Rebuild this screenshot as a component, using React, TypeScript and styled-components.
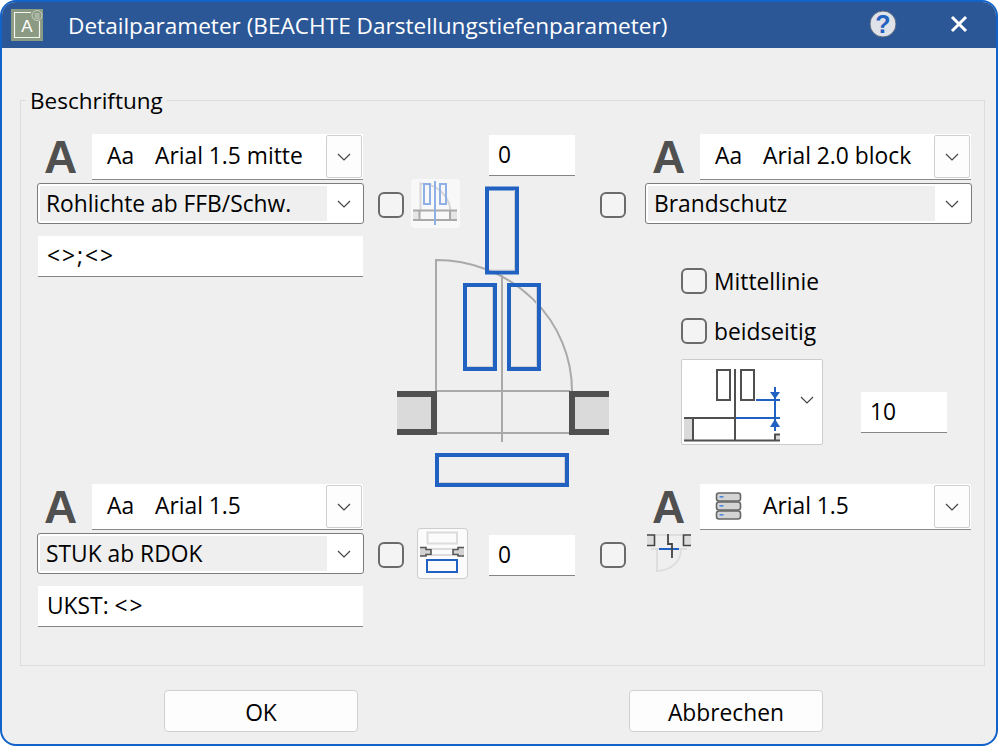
import React from 'react'
import styled, { createGlobalStyle } from 'styled-components'

const BLUE = '#2161c1'
const DARK = '#505050'
const GREY = '#a9a9a9'
const PALE = '#dadada'

const GlobalStyle = createGlobalStyle`
  html, body {
    margin: 0;
    padding: 0;
    background: #ffffff;
  }
  * {
    box-sizing: border-box;
  }
  body {
    font-family: "Open Sans", "Noto Sans", "Liberation Sans", sans-serif;
    color: #000000;
  }
`

const Chevron = () => (
  <svg width="14" height="8" viewBox="0 0 14 8" fill="none">
    <polyline points="1,1 7,7 13,1" stroke="#444444" strokeWidth="1.2" />
  </svg>
)

const AppIcon = () => (
  <svg width="32" height="32" viewBox="11 9 32 32">
    <rect x="11" y="9" width="32" height="32" fill="#8b9a82" />
    <path d="M31 12.5H14.5V37.5H39.5V21" fill="none" stroke="#f2f4ef" strokeWidth="1.2" />
    <circle cx="37" cy="15.5" r="5" fill="none" stroke="#c9d0c2" strokeWidth="1" />
    <path d="M34.5 14h5M34.5 16h5M34.5 18h5" stroke="#dde1d8" strokeWidth="0.8" />
    <text x="27" y="32" textAnchor="middle" fontFamily="Liberation Sans" fontSize="17" fill="#ffffff">A</text>
  </svg>
)

const HelpIcon = () => (
  <svg width="28" height="28" viewBox="0 0 28 28">
    <circle cx="14" cy="14" r="13" fill="#dfe2e8" stroke="#5f6b80" strokeWidth="1" />
    <text x="14" y="23" textAnchor="middle" fontFamily="Liberation Sans" fontWeight="700" fontSize="25" fill={BLUE}>?</text>
  </svg>
)

const CloseIcon = () => (
  <svg width="18" height="18" viewBox="0 0 18 18">
    <path d="M2 2L16 16M16 2L2 16" stroke="#ffffff" strokeWidth="3" />
  </svg>
)

const StackIcon = () => (
  <svg width="27" height="28" viewBox="0 0 27 28">
    {[1, 10, 19].map((y) => (
      <g key={y}>
        <rect x="1.5" y={y} width="24" height="8" rx="2.5" fill="#d4d4d4" stroke="#666666" strokeWidth="1.6" />
        <rect x="4.5" y={y + 3} width="4" height="1.6" fill="#4a86dc" />
      </g>
    ))}
  </svg>
)

const DoorDiagram = () => (
  <svg width="214" height="303" viewBox="396 186 214 303" fill="none">
    <path d="M436 391V260A136 131 0 0 1 572 391" stroke={GREY} strokeWidth="2" />
    <path d="M502 275V442M436 391H570M436 433H570" stroke={GREY} strokeWidth="2" />
    <path d="M397 394H434V432H397" fill={PALE} stroke={DARK} strokeWidth="6" />
    <path d="M609 394H572V432H609" fill={PALE} stroke={DARK} strokeWidth="6" />
    <rect x="487" y="188.5" width="30" height="84" stroke={BLUE} strokeWidth="4" />
    <rect x="465" y="285" width="30" height="84" stroke={BLUE} strokeWidth="4" />
    <rect x="509" y="285" width="30" height="84" stroke={BLUE} strokeWidth="4" />
    <rect x="437" y="455" width="130" height="30" stroke={BLUE} strokeWidth="4" />
    <path d="M489.5 270H514.500V190M467.500 366.500H492.500V287M511.500 366.500H536.500V287M439.500 482.500H564.500V457" stroke="#cfcfcf" strokeWidth="1" />
  </svg>
)

const TopThumbDrawing = () => (
  <svg width="49" height="49" viewBox="411 179 49 49" fill="none">
    <path d="M420.500 210V183.500A30 30 0 0 1 450.500 210" stroke="#d6d6d6" strokeWidth="2" />
    <rect x="413" y="211" width="6" height="9" fill="#e6e6e6" />
    <rect x="451" y="211" width="6" height="9" fill="#e6e6e6" />
    <path d="M413 210.500H457M413 220H457M419.500 210V220M450 210V220" stroke={GREY} strokeWidth="2" />
    <rect x="424" y="184" width="6" height="20" stroke="#8fb0e6" strokeWidth="2" />
    <rect x="440" y="184" width="6" height="20" stroke="#8fb0e6" strokeWidth="2" />
    <path d="M435 181V225" stroke="#8fb0e6" strokeWidth="2" />
  </svg>
)

const BottomThumbDrawing = () => (
  <svg width="51" height="51" viewBox="417 528 51 51" fill="none">
    <rect x="427.500" y="532.500" width="29.500" height="11" stroke="#dcdcdc" strokeWidth="2" />
    <path d="M432 549H452M432 555H452" stroke="#dcdcdc" strokeWidth="2" />
    <path d="M420 547.500H426V549.500H431V554.500H426V556H420" fill="#d2d2d2" stroke="#555555" strokeWidth="1.600" />
    <path d="M464 547.500H458V549.500H453V554.500H458V556H464" fill="#d2d2d2" stroke="#555555" strokeWidth="1.600" />
    <rect x="427" y="560" width="30" height="12" stroke={BLUE} strokeWidth="2" />
  </svg>
)

const SideThumbDrawing = () => (
  <svg width="44" height="38" viewBox="647 535 44 38" fill="none">
    <path d="M654 536H683M651 550H687" stroke="#dedede" strokeWidth="2" />
    <path d="M657 551V572A24 21 0 0 0 681 551" stroke="#dedede" strokeWidth="2" />
    <path d="M647 536H654.500V546.500H647" fill="#dcdcdc" stroke="#444444" strokeWidth="1.600" />
    <path d="M691 536H683.500V546.500H691" fill="#dcdcdc" stroke="#444444" strokeWidth="1.600" />
    <path d="M659 550H679" stroke={BLUE} strokeWidth="2" />
    <path d="M668 535V545H672V559" stroke="#444444" strokeWidth="1.800" />
  </svg>
)

const OffsetDrawing = () => (
  <svg width="100" height="76" viewBox="683 366 100 76" fill="none">
    <rect x="684" y="418" width="8.500" height="22" fill={PALE} />
    <rect x="776" y="435" width="4" height="5" fill={PALE} />
    <path d="M684 418H735M684 440.500H780M693 418V440M775 440V434.500H780M735 369V440" stroke={DARK} strokeWidth="2" />
    <rect x="717" y="370" width="13" height="30" stroke={DARK} strokeWidth="2" />
    <rect x="741" y="370" width="13" height="30" stroke={DARK} strokeWidth="2" />
    <path d="M756 400H780M736 418H780M775 387V431" stroke={BLUE} strokeWidth="2" />
    <path d="M770 392H780L775 399ZM770 427H780L775 419Z" fill={BLUE} />
  </svg>
)

const Window = styled.div`
  width: 998px;
  height: 746px;
  display: flex;
  flex-direction: column;
  overflow: hidden;
  background: #efefef;
  border: 2px solid #1263c9;
  border-radius: 16px;
`

const TitleBar = styled.header`
  height: 46px;
  flex: none;
  display: flex;
  align-items: center;
  background: #2b5797;
  color: #ffffff;
  padding: 0 28px 0 9px;
`

const TitleText = styled.h1`
  flex: 1;
  margin: 1px 0 0 25px;
  font-size: 22.6px;
  line-height: 46px;
  font-weight: 400;
`

const TitleButton = styled.span<{ $gap: number }>`
  display: flex;
  margin-left: ${(p) => p.$gap}px;
  margin-top: -2px;
`

const Group = styled.section`
  margin: 52px 11px 0 18px;
  height: 566px;
  flex: none;
  border: 1px solid #dcdcdc;
  padding: 0 12px 0 16px;
`

const Legend = styled.div`
  width: fit-content;
  height: 28px;
  margin: -14px 0 19px -11px;
  padding: 0 4px;
  background: #efefef;
  font-size: 22.5px;
  line-height: 28px;
`

const Columns = styled.div`
  display: grid;
  grid-template-columns: 327px 281px 327px;
  grid-template-rows: 350px 142px;
`

const Panel = styled.div`
  display: flex;
  flex-direction: column;
  align-items: flex-start;
`

const FontRow = styled.div`
  display: flex;
  align-items: center;
  height: 46px;
`

const BigA = styled.span`
  width: 55px;
  padding-left: 7px;
  font-family: "Liberation Sans", Arial, sans-serif;
  font-size: 46px;
  font-weight: 700;
  line-height: 46px;
  color: ${DARK};
`

const FontCombo = styled.div`
  width: 271px;
  height: 46px;
  display: flex;
  align-items: center;
  background: #ffffff;
  border-bottom: 1px solid #8a8a8a;
  font-size: 22.8px;
  padding: 0 1px 0 15px;
`

const Swatch = styled.span`
  width: 48px;
  display: flex;
  margin-top: -2px;
`

const FontName = styled.span`
  flex: 1;
  margin-top: -2px;
`

const ComboButton = styled.span`
  width: 36px;
  height: 43px;
  display: flex;
  align-items: center;
  justify-content: center;
  border: 1px solid #cfcfcf;
  border-radius: 2px;
  background: #fdfdfd;
`

const Select = styled.div`
  width: 327px;
  height: 41px;
  margin-top: 3px;
  padding: 2px;
  display: flex;
  background: #ffffff;
  border: 1px solid #7c7c7c;
  border-radius: 3px;
`

const SelectValue = styled.span`
  flex: 1;
  background: #efefef;
  padding-left: 6px;
  font-size: 22.8px;
  line-height: 36px;
`

const SelectArrow = styled.span`
  width: 34px;
  display: flex;
  align-items: center;
  justify-content: center;
`

const Field = styled.div<{ $width?: number }>`
  width: ${(p) => p.$width ?? 325}px;
  height: 41px;
  background: #ffffff;
  border-bottom: 1px solid #858585;
  padding-left: 9px;
  font-size: 22.8px;
  line-height: 40px;
`

const TextField = styled(Field)`
  margin: 12px 0 0 1px;
`

const Angles = styled.span`
  letter-spacing: 2px;
`

const Center = styled.div`
  grid-column: 2;
  grid-row: 1 / span 2;
  display: grid;
  grid-template-rows: 45px 349px 51px 47px;
  padding-left: 14px;
`

const TopField = styled(Field)`
  grid-row: 1;
  align-self: end;
  justify-self: start;
  margin: 0 0 3px 111px;
`

const ControlRow = styled.div`
  grid-row: 2;
  grid-column: 1;
  align-self: start;
  display: flex;
  align-items: center;
  height: 49px;
`

const BottomRow = styled(ControlRow)`
  grid-row: 3;
  height: 51px;
`

const CheckBox = styled.input.attrs({ type: 'checkbox' })<{ $left?: number }>`
  appearance: none;
  width: 26px;
  height: 26px;
  margin: 2px 0 0 ${(p) => p.$left ?? 0}px;
  flex: none;
  background: #f4f4f4;
  border: 2px solid #6b6b6b;
  border-radius: 6px;
`

const Thumb = styled.span<{ $left: number; $framed?: boolean }>`
  display: flex;
  margin-left: ${(p) => p.$left}px;
  background: ${(p) => (p.$framed ? '#fbfbfb' : '#f8f8f8')};
  border-radius: 4px;
  box-shadow: ${(p) => (p.$framed ? 'inset 0 0 0 1px #cdcdcd' : 'none')};
`

const InlineField = styled(Field)`
  margin: 4px 0 0 21px;
`

const DiagramSlot = styled.div`
  grid-row: 2;
  grid-column: 1;
  margin: 7px 0 0 18px;
  display: flex;
  align-items: flex-start;
  justify-content: flex-start;
`

const RightOptions = styled.div`
  margin: 44px 0 0 36px;
  display: flex;
  flex-direction: column;
`

const OptionLabel = styled.label`
  height: 26px;
  margin-bottom: 24px;
  display: flex;
  align-items: center;
  gap: 7px;
  font-size: 22.8px;

  input {
    margin-top: 0;
  }
`

const OffsetRow = styled.div`
  margin-top: -9px;
  display: flex;
  align-items: flex-end;
`

const OffsetCombo = styled.div`
  width: 142px;
  height: 86px;
  display: flex;
  align-items: flex-end;
  padding: 0 0 2px 1px;
  background: #ffffff;
  border: 1px solid #cccccc;
  border-radius: 2px;
`

const OffsetArrow = styled.span`
  display: flex;
  margin: 0 0 38px 17px;
`

const OffsetField = styled(Field)`
  margin: 0 0 12px 38px;
`

const SideColumn = styled(Panel)`
  grid-column: 3;
`

const SideThumb = styled.span`
  display: flex;
  margin: 4px 0 0 2px;
`

const Footer = styled.footer`
  display: flex;
  padding: 24px 0 0 162px;
  gap: 271px;
`

const DialogButton = styled.button`
  width: 194px;
  height: 42px;
  padding: 3px 0 0;
  background: #fdfdfd;
  border: 1px solid #d0d0d0;
  border-radius: 4px;
  font-family: inherit;
  font-size: 22.8px;
  color: #000000;
`

const FontPicker = ({ name, icon }: { name: string; icon?: React.ReactNode }) => (
  <FontRow>
    <BigA>A</BigA>
    <FontCombo>
      <Swatch>{icon ?? 'Aa'}</Swatch>
      <FontName>{name}</FontName>
      <ComboButton>
        <Chevron />
      </ComboButton>
    </FontCombo>
  </FontRow>
)

const ParamSelect = ({ value }: { value: string }) => (
  <Select>
    <SelectValue>{value}</SelectValue>
    <SelectArrow>
      <Chevron />
    </SelectArrow>
  </Select>
)

export default function App() {
  return (
    <>
      <GlobalStyle />
      <Window>
        <TitleBar>
          <AppIcon />
          <TitleText>Detailparameter (BEACHTE Darstellungstiefenparameter)</TitleText>
          <TitleButton $gap={0}>
            <HelpIcon />
          </TitleButton>
          <TitleButton $gap={53}>
            <CloseIcon />
          </TitleButton>
        </TitleBar>
        <Group>
          <Legend>Beschriftung</Legend>
          <Columns>
            <Panel>
              <FontPicker name="Arial 1.5 mitte" />
              <ParamSelect value="Rohlichte ab FFB/Schw." />
              <TextField>
                <Angles>&lt;&gt;;&lt;&gt;</Angles>
              </TextField>
            </Panel>
            <Center>
              <TopField $width={86}>0</TopField>
              <DiagramSlot>
                <DoorDiagram />
              </DiagramSlot>
              <ControlRow>
                <CheckBox />
                <Thumb $left={7}>
                  <TopThumbDrawing />
                </Thumb>
                <CheckBox $left={140} />
              </ControlRow>
              <BottomRow>
                <CheckBox />
                <Thumb $left={13} $framed>
                  <BottomThumbDrawing />
                </Thumb>
                <InlineField $width={86}>0</InlineField>
                <CheckBox $left={25} />
              </BottomRow>
            </Center>
            <Panel>
              <FontPicker name="Arial 2.0 block" />
              <ParamSelect value="Brandschutz" />
              <RightOptions>
                <OptionLabel>
                  <CheckBox />
                  Mittellinie
                </OptionLabel>
                <OptionLabel>
                  <CheckBox />
                  beidseitig
                </OptionLabel>
                <OffsetRow>
                  <OffsetCombo>
                    <OffsetDrawing />
                    <OffsetArrow>
                      <Chevron />
                    </OffsetArrow>
                  </OffsetCombo>
                  <OffsetField $width={86}>10</OffsetField>
                </OffsetRow>
              </RightOptions>
            </Panel>
            <Panel>
              <FontPicker name="Arial 1.5" />
              <ParamSelect value="STUK ab RDOK" />
              <TextField>
                UKST: <Angles>&lt;&gt;</Angles>
              </TextField>
            </Panel>
            <SideColumn>
              <FontPicker name="Arial 1.5" icon={<StackIcon />} />
              <SideThumb>
                <SideThumbDrawing />
              </SideThumb>
            </SideColumn>
          </Columns>
        </Group>
        <Footer>
          <DialogButton>OK</DialogButton>
          <DialogButton>Abbrechen</DialogButton>
        </Footer>
      </Window>
    </>
  )
}
